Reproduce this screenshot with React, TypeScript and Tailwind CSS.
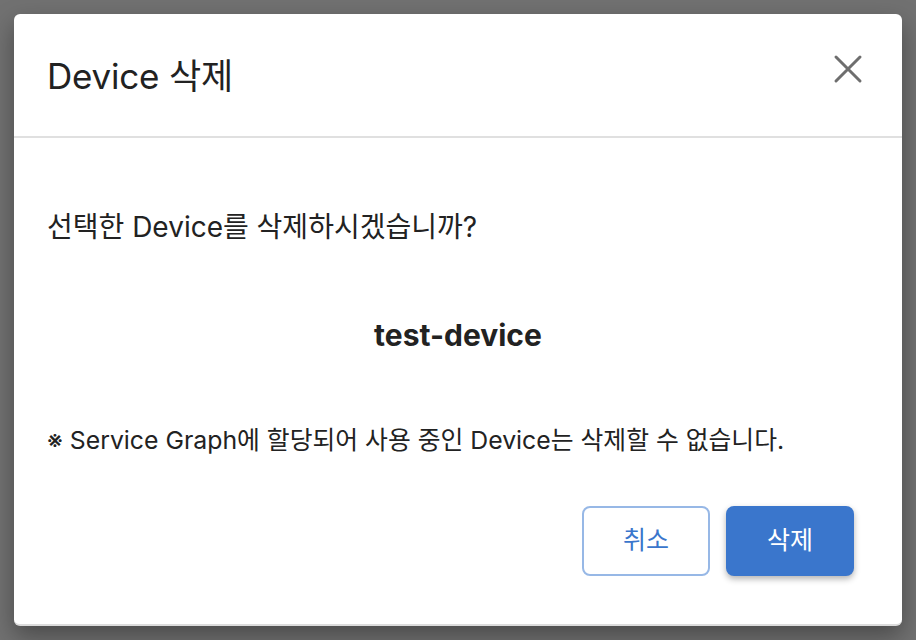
const font = {
  fontFamily: 'Inter, "Noto Sans CJK KR", sans-serif',
}

function CloseIcon() {
  return (
    <svg width="30" height="30" viewBox="0 0 30 30" fill="none">
      <path d="M3 3L27 27M27 3L3 27" stroke="#6e6e6e" strokeWidth="3" strokeLinecap="round" />
    </svg>
  )
}

export default function App() {
  return (
    <div
      className="w-[916px] h-[640px] bg-[#717171] pt-[14px] pl-[14px] overflow-hidden"
      style={font}
    >
      <div className="w-[888px] h-[612px] bg-white rounded-[6px] border-b-2 border-[#dcdcdc] shadow-[0_10px_24px_rgba(0,0,0,0.35)] flex flex-col">
        {/* header */}
        <div className="h-[124px] flex items-center justify-between pl-[33px] pr-[39px] border-b-2 border-[#e0e0e0]">
          <h1 className="text-[35px] text-[#222] tracking-[-0.2px] mt-[2px]">Device 삭제</h1>
          <button className="-mt-[12px]">
            <CloseIcon />
          </button>
        </div>

        {/* body */}
        <div className="flex-1 flex flex-col px-[33px] pb-[48px]">
          <p className="mt-[71px] text-[28px] leading-[36px] text-[#222]">
            선택한 Device를 삭제하시겠습니까?
          </p>
          <p className="mt-[72px] text-center text-[30px] leading-[36px] font-bold text-[#222]">
            test-device
          </p>
          <p className="mt-[70px] text-[24.8px] leading-[34px] text-[#222]">
            ※ Service Graph에 할당되어 사용 중인 Device는 삭제할 수 없습니다.
          </p>
          <div className="mt-auto flex justify-end gap-[16px] pr-[15px]">
            <button className="w-[128px] h-[70px] rounded-[8px] border-2 border-[#97b8e6] text-[#3a76cc] text-[25px]">
              취소
            </button>
            <button className="w-[128px] h-[70px] rounded-[8px] bg-[#3a76cc] text-white text-[25px] shadow-[0_3px_6px_rgba(0,0,0,0.3)]">
              삭제
            </button>
          </div>
        </div>
      </div>
    </div>
  )
}
